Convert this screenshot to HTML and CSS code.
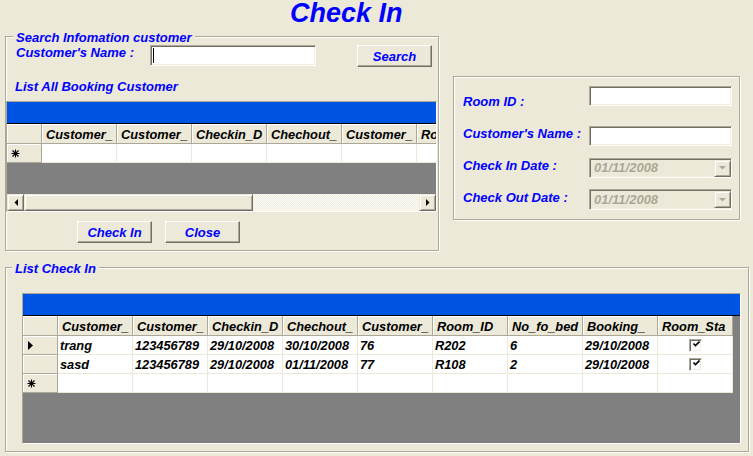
FILE: index.html
```html
<!DOCTYPE html>
<html>
<head>
<meta charset="utf-8">
<title>Check In</title>
<link rel="stylesheet" href="styles.css">
</head>
<body>
<div class="form">
  <h1 class="title">Check In</h1>
  <div class="top">
    <div class="group group-search">
      <span class="legend legend-search">Search Infomation customer</span>
      <div class="search-row">
        <span class="lbl lbl-name">Customer's Name :</span>
        <div class="textbox tb-search"><span class="caret"></span></div>
        <button class="btn btn-search">Search</button>
      </div>
      <div class="lbl list-title">List All Booking Customer</div>
      <div class="grid grid1">
        <div class="caption"></div>
        <div class="grow ghead">
          <div class="rh"></div>
          <div class="hc">Customer_</div>
          <div class="hc">Customer_</div>
          <div class="hc">Checkin_D</div>
          <div class="hc">Chechout_</div>
          <div class="hc">Customer_</div>
          <div class="hc hc-cut">Room_ID</div>
        </div>
        <div class="grow drow">
          <div class="rh rh-star"><svg class="star" width="9" height="9" viewBox="0 0 9 9"><path d="M4.5 0.5V8.5M0.5 4.5H8.5M1.5 1.5L7.5 7.5M7.5 1.5L1.5 7.5" stroke="#000" stroke-width="1.1" fill="none"/></svg></div>
          <div class="dc"></div>
          <div class="dc"></div>
          <div class="dc"></div>
          <div class="dc"></div>
          <div class="dc"></div>
          <div class="dc dc-cut"></div>
        </div>
        <div class="gfill gfill1"></div>
        <div class="hscroll">
          <div class="sb-btn"><svg width="4" height="7" viewBox="0 0 4 7"><path d="M4 0V7L0.5 3.5Z" fill="#000"/></svg></div>
          <div class="sb-thumb"></div>
          <div class="sb-track"></div>
          <div class="sb-btn"><svg width="4" height="7" viewBox="0 0 4 7"><path d="M0 0V7L3.5 3.5Z" fill="#000"/></svg></div>
        </div>
      </div>
      <div class="actions">
        <button class="btn btn-checkin">Check In</button>
        <button class="btn btn-close">Close</button>
      </div>
    </div>

    <div class="group group-room">
      <div class="frow frow1">
        <span class="lbl flbl flbl1">Room ID :</span>
        <div class="textbox fbox"></div>
      </div>
      <div class="frow frow2">
        <span class="lbl flbl">Customer's Name :</span>
        <div class="textbox fbox"></div>
      </div>
      <div class="frow frow3">
        <span class="lbl flbl">Check In Date :</span>
        <div class="textbox fbox combo"><span class="combo-text">01/11/2008</span><span class="combo-btn"><svg width="7" height="4" viewBox="0 0 7 4"><path d="M0 0H7L3.5 3.5Z" fill="#ACA899"/></svg></span></div>
      </div>
      <div class="frow frow4">
        <span class="lbl flbl flbl4">Check Out Date :</span>
        <div class="textbox fbox combo combo4"><span class="combo-text">01/11/2008</span><span class="combo-btn"><svg width="7" height="4" viewBox="0 0 7 4"><path d="M0 0H7L3.5 3.5Z" fill="#ACA899"/></svg></span></div>
      </div>
    </div>
  </div>

  <div class="group group-list">
    <span class="legend legend-list">List Check In</span>
    <div class="grid grid2">
      <div class="caption"></div>
      <div class="grow ghead">
        <div class="rh"></div>
        <div class="hc">Customer_</div>
        <div class="hc">Customer_</div>
        <div class="hc">Checkin_D</div>
        <div class="hc">Chechout_</div>
        <div class="hc">Customer_</div>
        <div class="hc">Room_ID</div>
        <div class="hc">No_fo_bed</div>
        <div class="hc">Booking_</div>
        <div class="hc">Room_Sta</div>
      </div>
      <div class="grow drow">
        <div class="rh rh-cur"><svg width="5" height="9" viewBox="0 0 5 9"><path d="M0 0L5 4.5L0 9Z" fill="#000"/></svg></div>
        <div class="dc">trang</div>
        <div class="dc">123456789</div>
        <div class="dc">29/10/2008</div>
        <div class="dc">30/10/2008</div>
        <div class="dc">76</div>
        <div class="dc">R202</div>
        <div class="dc">6</div>
        <div class="dc">29/10/2008</div>
        <div class="dc dc-check"><span class="checkbox"><svg width="7" height="7" viewBox="0 0 7 7"><path d="M0.5 2.5L2.5 4.5L6.5 0.5" stroke="#000" stroke-width="1.6" fill="none"/></svg></span></div>
      </div>
      <div class="grow drow">
        <div class="rh"></div>
        <div class="dc">sasd</div>
        <div class="dc">123456789</div>
        <div class="dc">29/10/2008</div>
        <div class="dc">01/11/2008</div>
        <div class="dc">77</div>
        <div class="dc">R108</div>
        <div class="dc">2</div>
        <div class="dc">29/10/2008</div>
        <div class="dc dc-check"><span class="checkbox"><svg width="7" height="7" viewBox="0 0 7 7"><path d="M0.5 2.5L2.5 4.5L6.5 0.5" stroke="#000" stroke-width="1.6" fill="none"/></svg></span></div>
      </div>
      <div class="grow drow">
        <div class="rh rh-star"><svg class="star" width="9" height="9" viewBox="0 0 9 9"><path d="M4.5 0.5V8.5M0.5 4.5H8.5M1.5 1.5L7.5 7.5M7.5 1.5L1.5 7.5" stroke="#000" stroke-width="1.1" fill="none"/></svg></div>
        <div class="dc"></div>
        <div class="dc"></div>
        <div class="dc"></div>
        <div class="dc"></div>
        <div class="dc"></div>
        <div class="dc"></div>
        <div class="dc"></div>
        <div class="dc"></div>
        <div class="dc"></div>
      </div>
      <div class="gfill gfill2"></div>
    </div>
  </div>
</div>
</body>
</html>
```

FILE: styles.css
```css
* { box-sizing: border-box; margin: 0; padding: 0; }
html, body { width: 753px; height: 456px; overflow: hidden; }
body {
  background: #ECE9D8;
  font-family: "Liberation Sans", Arial, sans-serif;
  font-weight: bold;
  font-style: italic;
  font-size: 13px;
  color: #0000ff;
}
.form { width: 753px; height: 456px; }

.title {
  font-size: 27px;
  line-height: 27px;
  height: 27px;
  padding-left: 290px;
  font-weight: bold;
  font-style: italic;
  color: #0000ff;
}

.top { display: flex; align-items: flex-start; }

.group {
  position: relative;
  border: 1px solid #ACA899;
  box-shadow: inset 1px 1px 0 #fff, 1px 1px 0 #fff;
}
.legend {
  position: absolute;
  top: -7px;
  line-height: 15px;
  padding: 0 3px;
  background: #ECE9D8;
  white-space: nowrap;
}
.legend-search { left: 7px; }
.legend-list { left: 6px; }

.lbl { line-height: 15px; white-space: nowrap; }

.group-search { margin: 9px 0 0 5px; width: 434px; height: 215px; }

.search-row { display: flex; align-items: flex-start; margin-top: 8px; height: 22px; }
.lbl-name { width: 134px; margin-left: 10px; flex: none; }

.textbox {
  background: #fff;
  border: 1px solid;
  border-color: #ACA899 #fff #fff #ACA899;
  box-shadow: inset 1px 1px 0 #716F64, inset -1px -1px 0 #F1EFE2;
}
.tb-search { width: 166px; height: 21px; flex: none; padding: 2px 0 0 2px; }
.caret { display: block; width: 1px; height: 15px; background: #000; }

.btn {
  font: inherit;
  color: #0000ff;
  background: #ECE9D8;
  border: 1px solid;
  border-color: #fff #716F64 #716F64 #fff;
  box-shadow: inset -1px -1px 0 #ACA899;
  width: 75px;
  height: 22px;
  padding: 0;
  text-align: center;
  line-height: 19px;
  flex: none;
}
.btn-search { margin-left: 41px; }

.list-title { margin: 12px 0 0 9px; }

/* grids */
.grid {
  border: 1px solid;
  border-color: #ACA899 #fff #fff #ACA899;
  background: #808080;
  overflow: hidden;
  color: #000;
  font-size: 12.8px;
}
.grid1 { margin-top: 7px; width: 431px; height: 111px; }
.caption { height: 22px; background: #0054E3; border-bottom: 1px solid #000; }
.grow { display: flex; }
.ghead { height: 20px; }
.drow { height: 19px; }
.rh {
  width: 35px;
  flex: none;
  background: #ECE9D8;
  border-right: 1px solid #ACA899;
  border-bottom: 1px solid #ACA899;
  box-shadow: inset 1px 1px 0 #fff;
  display: flex;
  align-items: center;
}
.rh-star { padding-left: 4px; }
.rh-cur { padding-left: 5px; }
.hc {
  width: 75px;
  flex: none;
  background: #ECE9D8;
  border-right: 1px solid #ACA899;
  border-bottom: 1px solid #ACA899;
  box-shadow: inset 1px 1px 0 #fff;
  padding: 2px 0 0 4px;
  line-height: 17px;
  white-space: nowrap;
  overflow: hidden;
}
.hc-cut, .dc-cut { width: 19px; border-right: 0; }
.dc {
  width: 75px;
  flex: none;
  background: #fff;
  border-right: 1px solid #ECE9D8;
  border-bottom: 1px solid #ECE9D8;
  padding: 1px 0 0 2px;
  line-height: 17px;
  white-space: nowrap;
  overflow: hidden;
}
.dc-check { display: flex; justify-content: center; align-items: center; padding: 0 0 0 1px; }
.checkbox {
  width: 13px;
  height: 13px;
  background: #fff;
  border: 1px solid;
  border-color: #ACA899 #fff #fff #ACA899;
  box-shadow: inset 1px 1px 0 #716F64, inset -1px -1px 0 #F1EFE2;
  display: flex;
  align-items: center;
  justify-content: center;
  padding: 0 0 1px 1px;
}
.gfill1 { height: 31px; }
.gfill2 { height: 50px; }

.hscroll { display: flex; height: 17px; }
.sb-btn, .sb-thumb {
  height: 17px;
  background: #ECE9D8;
  border: 1px solid;
  border-color: #ECE9D8 #716F64 #716F64 #ECE9D8;
  box-shadow: inset 1px 1px 0 #fff, inset -1px -1px 0 #ACA899;
}
.sb-btn { width: 17px; flex: none; display: flex; align-items: center; justify-content: center; }
.sb-thumb { width: 229px; flex: none; }
.sb-track {
  flex: 1;
  background: repeating-conic-gradient(#fff 0 25%, #ECE9D8 0 50%) 0 0 / 2px 2px;
}

.actions { display: flex; gap: 13px; margin: 9px 0 0 71px; }

/* right panel */
.group-room { margin: 49px 0 0 14px; width: 287px; height: 144px; flex: none; }
.frow { display: flex; align-items: flex-start; height: 20px; }
.frow1 { margin-top: 9px; }
.frow2 { margin-top: 20px; }
.frow3 { margin-top: 12px; }
.frow4 { margin-top: 11px; height: 21px; }
.flbl { width: 126px; margin-left: 9px; flex: none; }
.flbl1 { padding-top: 8px; }
.flbl4 { padding-top: 1px; }
.fbox { width: 143px; height: 20px; flex: none; }
.combo { background: #ECE9D8; display: flex; align-items: center; justify-content: space-between; }
.combo4 { height: 21px; }
.combo-text { color: #ACA899; padding-left: 4px; line-height: 18px; }
.combo-btn {
  width: 17px;
  height: 17px;
  background: #ECE9D8;
  border: 1px solid;
  border-color: #ECE9D8 #716F64 #716F64 #ECE9D8;
  box-shadow: inset 1px 1px 0 #fff, inset -1px -1px 0 #ACA899;
  display: flex;
  align-items: center;
  justify-content: center;
}

/* bottom group */
.group-list { margin: 16px 0 0 5px; width: 744px; height: 185px; }
.grid2 { margin: 25px 0 0 16px; width: 719px; height: 151px; }
```
